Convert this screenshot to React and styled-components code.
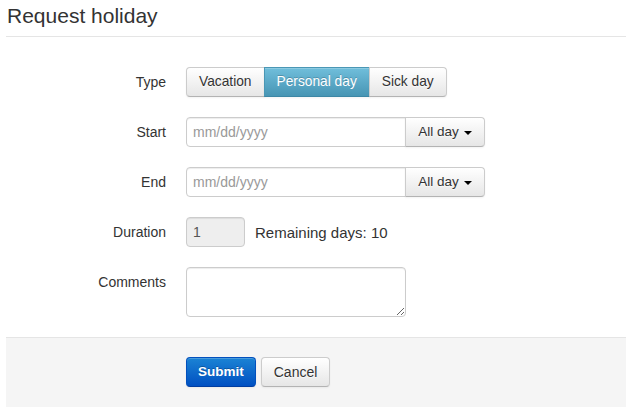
import styled, { createGlobalStyle, css } from 'styled-components';

const GlobalStyle = createGlobalStyle`
  body {
    margin: 0;
    background: #fff;
    font-family: "Liberation Sans", Arial, sans-serif;
    font-size: 14px;
    color: #333;
  }
`

const Page = styled.div`
  width: 620px;
  margin-left: 6px;
`

const Title = styled.div`
  height: 36px;
  line-height: 31px;
  font-size: 21px;
  color: #333;
  padding-left: 1px;
  border-bottom: 1px solid #e5e5e5;
  margin-bottom: 30px;
`

const Group = styled.div`
  display: flex;
  align-items: flex-start;
  margin-bottom: 20px;
`

const Label = styled.label`
  width: 160px;
  margin-right: 20px;
  padding-top: 5px;
  line-height: 20px;
  text-align: right;
  color: #333;
`

const Controls = styled.div`
  display: flex;
  align-items: center;
`

const btnBase = css`
  box-sizing: border-box;
  height: 30px;
  padding: 4px 12px;
  font-family: inherit;
  font-size: 14px;
  line-height: 20px;
  border: 1px solid #ccc;
  border-bottom-color: #b3b3b3;
  cursor: pointer;
`

const Btn = styled.button`
  ${btnBase}
  color: #333;
  text-shadow: 0 1px 1px rgba(255,255,255,.75);
  background: linear-gradient(#ffffff, #e6e6e6);
  box-shadow: inset 0 1px 0 rgba(255,255,255,.2), 0 1px 2px rgba(0,0,0,.05);
  border-radius: 4px;

  ${p => p.$active && css`
    color: #fff;
    text-shadow: 0 -1px 0 rgba(0,0,0,.2);
    background: linear-gradient(#70bedb, #4795b4);
    border-color: #4a97b5;
    border-bottom-color: #3d87a5;
  `}

  ${p => p.$primary && css`
    padding: 4px 11px;
    font-size: 13.5px;
    color: #fff;
    font-weight: bold;
    text-shadow: 0 -1px 0 rgba(0,0,0,.25);
    background: linear-gradient(#1b83d4, #0050c2);
    border-color: #0250bd;
    border-bottom-color: #003da0;
  `}
`

const BtnGroup = styled.div`
  display: flex;

  ${Btn} {
    font-size: 13.75px;
    border-radius: 0;
    margin-left: -1px;
  }
  ${Btn}:first-child {
    margin-left: 0;
    border-radius: 4px 0 0 4px;
  }
  ${Btn}:last-child {
    border-radius: 0 4px 4px 0;
  }
`

const Input = styled.input`
  box-sizing: border-box;
  width: ${p => p.$w || 220}px;
  height: 30px;
  padding: 4px 6px;
  font-family: inherit;
  font-size: 14px;
  line-height: 20px;
  color: #555;
  background: ${p => p.readOnly ? '#eee' : '#fff'};
  border: 1px solid #ccc;
  border-radius: 4px;
  box-shadow: inset 0 1px 1px rgba(0,0,0,.075);
  outline: none;

  &::placeholder {
    color: #999;
  }
`

const Append = styled.div`
  display: flex;

  ${Input} {
    border-radius: 4px 0 0 4px;
  }
  ${Btn} {
    margin-left: -1px;
    width: 80px;
    padding: 4px 10px;
    font-size: 13.5px;
    border-radius: 0 4px 4px 0;
    display: flex;
    align-items: center;
    justify-content: center;
    gap: 5px;
  }
`

const Caret = styled.span`
  display: inline-block;
  width: 0;
  height: 0;
  margin-top: 2px;
  border-top: 4px solid #000;
  border-left: 4px solid transparent;
  border-right: 4px solid transparent;
`

const Help = styled.span`
  margin-left: 10px;
  font-size: 15px;
  color: #333;
`

const Textarea = styled.textarea`
  box-sizing: border-box;
  width: 220px;
  height: 50px;
  padding: 4px 6px;
  font-family: inherit;
  font-size: 14px;
  border: 1px solid #ccc;
  border-radius: 4px;
  box-shadow: inset 0 1px 1px rgba(0,0,0,.075);
  outline: none;
  display: block;
`

const Footer = styled.div`
  display: flex;
  gap: 5px;
  height: 70px;
  box-sizing: border-box;
  padding: 19px 20px 20px 180px;
  background: #f5f5f5;
  border-top: 1px solid #e5e5e5;
`

function DateRow({ label }) {
  return (
    <Group>
      <Label>{label}</Label>
      <Controls>
        <Append>
          <Input placeholder="mm/dd/yyyy" />
          <Btn>All day <Caret /></Btn>
        </Append>
      </Controls>
    </Group>
  )
}

export default function App() {
  const types = ['Vacation', 'Personal day', 'Sick day'];

  return (
    <Page>
      <GlobalStyle />
      <Title>Request holiday</Title>
      <Group>
        <Label>Type</Label>
        <Controls>
          <BtnGroup>
            {types.map(t => (
              <Btn key={t} $active={t === 'Personal day'}>{t}</Btn>
            ))}
          </BtnGroup>
        </Controls>
      </Group>
      <DateRow label="Start" />
      <DateRow label="End" />
      <Group>
        <Label>Duration</Label>
        <Controls>
          <Input $w={59} readOnly value="1" />
          <Help>Remaining days: 10</Help>
        </Controls>
      </Group>
      <Group>
        <Label>Comments</Label>
        <Controls>
          <Textarea />
        </Controls>
      </Group>
      <Footer>
        <Btn $primary>Submit</Btn>
        <Btn>Cancel</Btn>
      </Footer>
    </Page>
  )
}
